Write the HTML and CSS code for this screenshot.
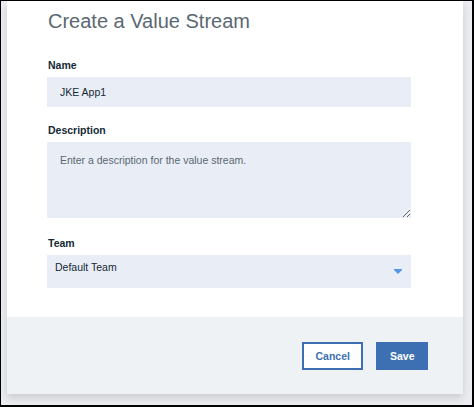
FILE: index.html
```html
<!DOCTYPE html>
<html lang="en">
<head>
<meta charset="utf-8">
<title>Create a Value Stream</title>
<link rel="stylesheet" href="styles.css">
</head>
<body>
<div class="frame">
  <div class="modal">
    <div class="modal-body">
      <h1 class="title">Create a Value Stream</h1>
      <label class="label label-first" for="vs-name">Name</label>
      <input class="field" id="vs-name" type="text" value="JKE App1">
      <label class="label" for="vs-desc">Description</label>
      <textarea class="field area" id="vs-desc" placeholder="Enter a description for the value stream."></textarea>
      <label class="label label-team">Team</label>
      <div class="select">
        <span class="select-text">Default Team</span>
        <svg class="caret" width="8" height="5" viewBox="0 0 8 5" aria-hidden="true"><path d="M0 0H8V1L4 5L0 1Z" fill="#5596e6"/></svg>
      </div>
    </div>
    <div class="modal-footer">
      <button class="btn btn-secondary" type="button">Cancel</button>
      <button class="btn btn-primary" type="button">Save</button>
    </div>
  </div>
</div>
</body>
</html>
```

FILE: styles.css
```css
html, body {
  margin: 0;
  padding: 0;
}

body {
  font-family: "Liberation Sans", Arial, sans-serif;
  color: #152935;
}

.frame {
  width: 474px;
  height: 407px;
  box-sizing: border-box;
  border-style: solid;
  border-color: #000;
  border-width: 1px 2px 2px 1px;
  background: #ebedf0;
  padding: 0 9px 0 6px;
  overflow: hidden;
}

.modal {
  background: #fff;
  box-shadow: 0 4px 8px rgba(0, 0, 0, 0.14);
}

.modal-body {
  height: 316px;
  box-sizing: border-box;
  padding: 8px 52px 0 40px;
  display: flex;
  flex-direction: column;
  align-items: flex-start;
}

.title {
  margin: 0 0 0 1px;
  font-size: 20px;
  line-height: 24px;
  font-weight: 400;
  color: #5a6872;
}

.label {
  display: block;
  margin: 16px 0 5px 1px;
  font-size: 10.5px;
  line-height: 14px;
  font-weight: 700;
  color: #152935;
}

.label-first {
  margin-top: 25px;
}

.label-team {
  margin-top: 18px;
  margin-bottom: 5px;
}

.field {
  display: block;
  width: 364px;
  height: 30px;
  box-sizing: border-box;
  margin: 0;
  border: none;
  outline: none;
  background: #e9eef6;
  padding: 0 13px;
  font-family: "Liberation Sans", Arial, sans-serif;
  font-size: 10.5px;
  color: #152935;
}

.area {
  height: 76px;
  padding: 11px 13px;
  line-height: 14px;
  resize: vertical;
}

.area::placeholder {
  color: #5a6872;
  opacity: 1;
}

.select {
  width: 364px;
  height: 33px;
  box-sizing: border-box;
  background: #e9eef6;
  padding: 5px 8px 0 8px;
  display: flex;
  justify-content: space-between;
  align-items: flex-start;
}

.select-text {
  font-size: 10.5px;
  line-height: 14px;
  color: #152935;
}

.caret {
  margin: 9px 1px 0 0;
}

.modal-footer {
  height: 77px;
  box-sizing: border-box;
  background: #eff2f5;
  padding: 25px 35px 0 0;
  display: flex;
  justify-content: flex-end;
  align-items: flex-start;
  gap: 13px;
}

.btn {
  height: 28px;
  box-sizing: border-box;
  padding: 0 11.5px;
  border: 2px solid #3d70b2;
  font-family: "Liberation Sans", Arial, sans-serif;
  font-size: 10.5px;
  font-weight: 700;
  line-height: 24px;
  cursor: pointer;
}

.btn-secondary {
  background: #fff;
  color: #3d70b2;
}

.btn-primary {
  background: #3d70b2;
  color: #fff;
}
```
